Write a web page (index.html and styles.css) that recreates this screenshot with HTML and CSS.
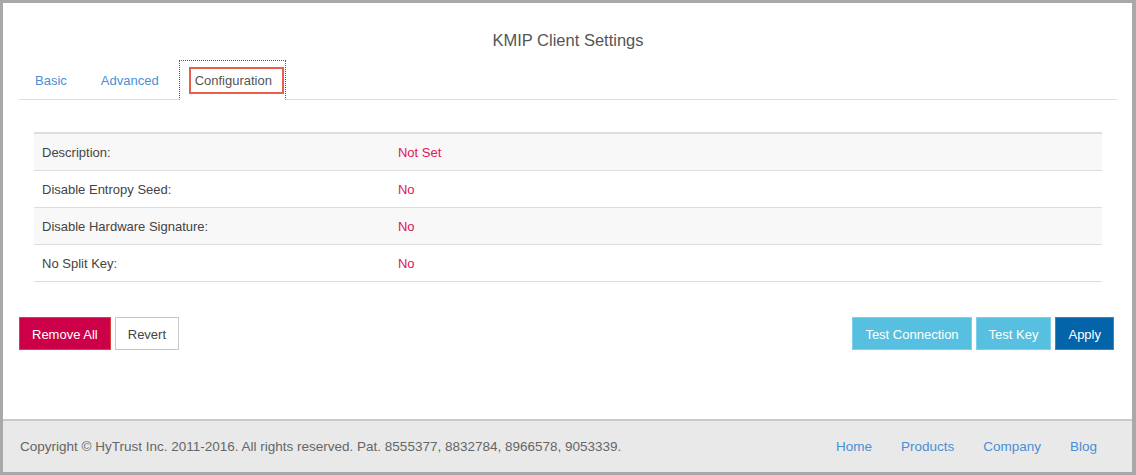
FILE: index.html
```html
<!DOCTYPE html>
<html lang="en">
<head>
    <meta charset="UTF-8">
    <meta name="viewport" content="width=device-width, initial-scale=1.0">
    <title>KMIP Client Settings</title>
    <link rel="stylesheet" href="styles.css">
</head>
<body>
    <div class="frame">
        <div class="main">
            <h1 class="title">KMIP Client Settings</h1>

            <ul class="tabs">
                <li class="tab"><a href="#">Basic</a></li>
                <li class="tab"><a href="#">Advanced</a></li>
                <li class="tab active"><a href="#"><span class="focus">Configuration</span></a></li>
            </ul>

            <table class="settings">
                <tr>
                    <td class="label">Description:</td>
                    <td class="value">Not Set</td>
                </tr>
                <tr>
                    <td class="label">Disable Entropy Seed:</td>
                    <td class="value">No</td>
                </tr>
                <tr>
                    <td class="label">Disable Hardware Signature:</td>
                    <td class="value">No</td>
                </tr>
                <tr>
                    <td class="label">No Split Key:</td>
                    <td class="value">No</td>
                </tr>
            </table>

            <div class="actions">
                <div class="group">
                    <button class="btn btn-danger">Remove All</button>
                    <button class="btn btn-default">Revert</button>
                </div>
                <div class="group">
                    <button class="btn btn-info">Test Connection</button>
                    <button class="btn btn-info">Test Key</button>
                    <button class="btn btn-primary">Apply</button>
                </div>
            </div>
        </div>

        <div class="footer">
            <p>Copyright &copy; HyTrust Inc. 2011-2016. All rights reserved. Pat. 8555377, 8832784, 8966578, 9053339.</p>
            <nav class="footer-links">
                <a href="#">Home</a>
                <a href="#">Products</a>
                <a href="#">Company</a>
                <a href="#">Blog</a>
            </nav>
        </div>
    </div>
</body>
</html>
```

FILE: styles.css
```css
* {
    box-sizing: border-box;
}

body {
    margin: 0;
    font-family: "Liberation Sans", Arial, sans-serif;
    font-size: 13px;
    color: #444;
    background-color: #fff;
}

a {
    color: #4a8fd6;
    text-decoration: none;
}

.frame {
    height: 475px;
    border: 3px solid #a9a9a9;
    border-right-width: 4px;
    display: flex;
    flex-direction: column;
}

.main {
    flex: 1;
    padding: 0 15px 0 16px;
}

.title {
    margin: 26px 0 0;
    font-size: 16.5px;
    font-weight: normal;
    line-height: 22px;
    text-align: center;
    color: #555;
}

.tabs {
    list-style: none;
    margin: 9px 0 0;
    padding: 0;
    display: flex;
    border-bottom: 1px solid #ddd;
}

.tab {
    margin-right: 2px;
}

.tab a {
    display: flex;
    align-items: center;
    height: 40px;
    padding: 0 15px;
    line-height: 17px;
    border: 1px solid transparent;
    margin-bottom: -1px;
}

.tab.active {
    margin-left: 2px;
}

.tab.active a {
    color: #555;
    border: 1px dotted #555;
    border-bottom-color: transparent;
    padding: 0 1px 0 9px;
    background-color: #fff;
}

.focus {
    display: block;
    border: 2px solid #e8604c;
    padding: 3px 10px 3px 4px;
}

.settings {
    width: calc(100% - 30px);
    margin: 32px 15px 0;
    border-collapse: collapse;
    border-top: 2px solid #ddd;
}

.settings td {
    height: 37px;
    padding: 2px 8px 0;
    border-bottom: 1px solid #ddd;
}

.settings tr:nth-child(odd) {
    background-color: #f8f8f8;
}

.settings .label {
    width: 33.33%;
}

.settings .value {
    color: #e0145a;
}

.actions {
    display: flex;
    justify-content: space-between;
    margin: 35px 3px 0 0;
}

.group {
    display: flex;
    gap: 4px;
}

.btn {
    height: 33px;
    padding: 2px 12px 0;
    font-family: inherit;
    font-size: 13px;
    border: 1px solid transparent;
    color: #fff;
    cursor: pointer;
}

.btn-danger {
    background-color: #cc0049;
    border-color: #d9423a;
}

.btn-default {
    background-color: #fff;
    border-color: #c8c8c8;
    color: #444;
}

.btn-info {
    background-color: #57bfe0;
    border-color: #7dd0ec;
}

.btn-primary {
    background-color: #0364a9;
    border-color: #3a86c8;
}

.footer {
    height: 53px;
    border-top: 2px solid #c9c9c9;
    background-color: #e9e9e9;
    display: flex;
    align-items: center;
    justify-content: space-between;
    padding: 0 35px 0 17px;
    color: #666;
    font-size: 13.5px;
}

.footer p {
    margin: 0;
}

.footer-links {
    display: flex;
    gap: 29px;
}
```
